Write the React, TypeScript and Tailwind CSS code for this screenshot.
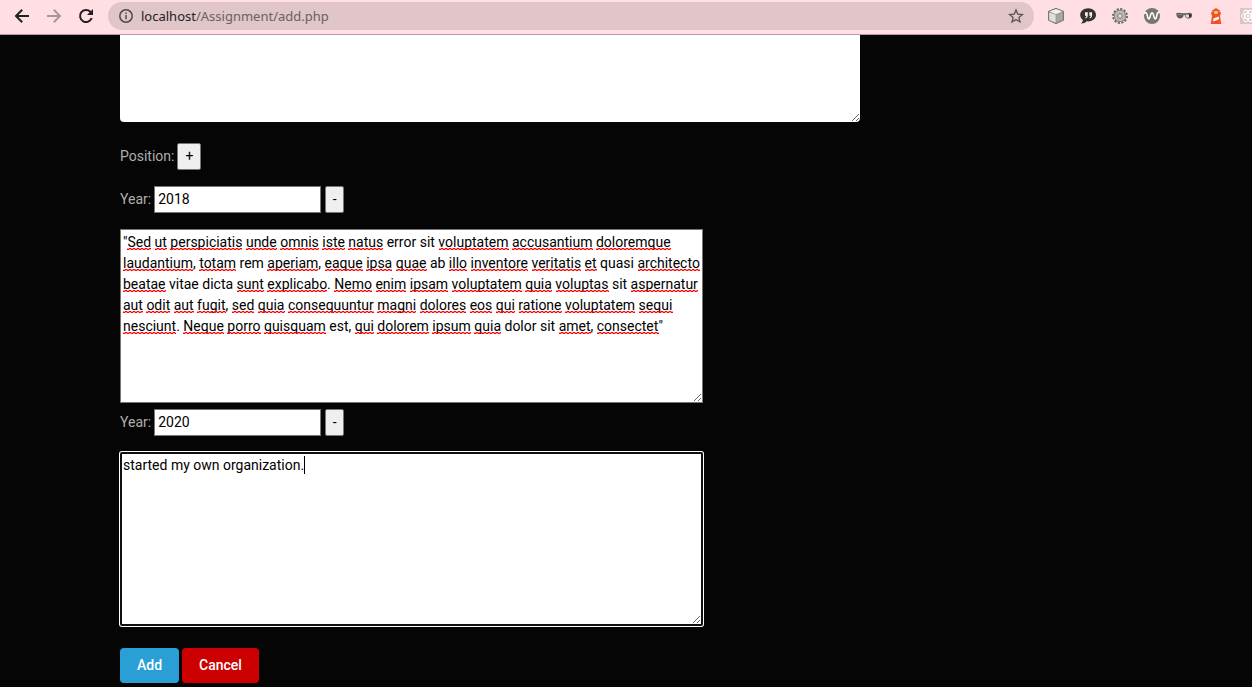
import { useState } from 'react'
import type { ReactNode } from 'react'

const BIO =
  '"Sed ut perspiciatis unde omnis iste natus error sit voluptatem accusantium doloremque laudantium, totam rem aperiam, eaque ipsa quae ab illo inventore veritatis et quasi architecto beatae vitae dicta sunt explicabo. Nemo enim ipsam voluptatem quia voluptas sit aspernatur aut odit aut fugit, sed quia consequuntur magni dolores eos qui ratione voluptatem sequi nesciunt. Neque porro quisquam est, qui dolorem ipsum quia dolor sit amet, consectet"'

const KNOWN_WORDS = new Set(['error', 'sit', 'rem', 'ab', 'quasi', 'vitae', 'dicta', 'est', 'dolor', 'started', 'my', 'own', 'organization'])

/** Underlines the words that the dictionary does not have. */
function spellingMarks(text: string): ReactNode[] {
  return text.split(/([A-Za-z]+)/).map((part, i) =>
    i % 2 === 1 && !KNOWN_WORDS.has(part) ? (
      <span
        key={i}
        className="bg-[linear-gradient(90deg,#f00_0_2px,#f006_2px_4px),linear-gradient(90deg,#f00_0_2px,#f006_2px_4px)] bg-[length:4px_1px,4px_1px] bg-[position:0_100%,2px_calc(100%-1px)] bg-repeat-x"
      >
        {part}
      </span>
    ) : (
      part
    ),
  )
}

function Toolbar() {
  return (
    <header className="flex h-[35px] shrink-0 items-start overflow-hidden border-b border-[#b39ca1] bg-[#ffdfe4] text-[#202124]">
      <nav className="flex h-8 shrink-0 items-center gap-4 pr-3.5 pl-3.5" aria-label="Browser">
        <button type="button" aria-label="Back">
          <svg className="size-4" viewBox="0 0 16 16" fill="none" stroke="currentColor" strokeWidth="2">
            <path d="M15 8H2.5M8.2 1.8L2 8l6.200 6.200" />
          </svg>
        </button>
        <button type="button" aria-label="Forward" className="text-[#a8989b]">
          <svg className="size-4" viewBox="0 0 16 16" fill="none" stroke="currentColor" strokeWidth="2">
            <path d="M1 8h12.500M7.800 1.800L14 8l-6.200 6.200" />
          </svg>
        </button>
        <button type="button" aria-label="Reload">
          <svg className="size-4" viewBox="0 0 16 16" fill="none">
            <path d="M13.700 10A6 6 0 1 1 12.300 3.800L13.500 5" stroke="currentColor" strokeWidth="2" />
            <path d="M15 1v6H9z" fill="currentColor" />
          </svg>
        </button>
      </nav>
      <div className="mt-0.5 flex h-7 min-w-0 flex-1 items-center rounded-full bg-[#e0c5c9] pr-2.5 pl-[11px]">
        <svg className="size-3.5 shrink-0" viewBox="0 0 14 14" fill="none" stroke="#4f494b" aria-hidden="true">
          <circle cx="7" cy="7" r="6.200" strokeWidth="1.500" />
          <path d="M7 6v4.300M7 3.500v1.500" strokeWidth="1.500" />
        </svg>
        <div className="ml-2 flex-1 truncate font-['Noto_Sans','Open_Sans',sans-serif] text-[13px] leading-5 text-[#6c6064]">
          <span className="text-[#202124]">localhost</span>/Assignment/add.php
        </div>
        <button type="button" aria-label="Bookmark this page">
          <svg className="size-4" viewBox="0 0 16 16" fill="none" stroke="#5b5356" strokeWidth="1.300">
            <path d="M8 1.900l1.800 4.200 4.600.4-3.500 3 1.100 4.500L8 11.600 4 14l1.100-4.500-3.500-3 4.600-.4z" />
          </svg>
        </button>
      </div>
      <div className="-mr-1 flex h-8 shrink-0 items-center gap-4 pl-3.5">
        <button type="button" aria-label="Cube extension">
          <svg className="size-4" viewBox="0 0 16 16">
            <path d="M8 .3l7.500 3v9L8 15.700.5 12.300v-9z" fill="#8b8b8b" stroke="#666" strokeWidth=".8" />
            <path d="M8 1l6.500 2.600L8 6.200 1.500 3.600z" fill="#f0f0f0" />
            <path d="M1.200 4.300L7.700 6.800v8L1.200 12z" fill="#dedede" />
            <path d="M8.300 6.800L14.800 4.300V12l-6.500 2.800z" fill="#a6a6a6" />
          </svg>
        </button>
        <button type="button" aria-label="Quote extension">
          <svg className="size-4" viewBox="0 0 16 16">
            <path d="M8.200.3C3.900.3.200 3.100.2 7c0 2.100 1 3.800 2.700 5-.1 1.400-.9 2.700-2 3.500 2.300.2 4.400-.7 5.800-2.200 5.100.6 9.300-2.200 9.300-6.300C16 3.100 12.500.3 8.200.3z" fill="#333" />
            <path d="M5 4.300h2.800v3c0 1.700-.8 2.700-2.200 3.100l-.4-.8c.8-.4 1.100-.9 1.200-1.900H5zM9.300 4.300h2.800v3c0 1.700-.8 2.700-2.200 3.100l-.4-.8c.8-.4 1.100-.9 1.200-1.900H9.300z" fill="#ffe8ec" />
          </svg>
        </button>
        <button type="button" aria-label="Gear extension">
          <svg className="size-4" viewBox="0 0 16 16" fill="none">
            <circle cx="8" cy="8" r="6.900" stroke="#666" strokeWidth="2" strokeDasharray="2.200 1.410" />
            <circle cx="8" cy="8" r="4.600" stroke="#8c8c8c" strokeWidth="3.200" />
            <circle cx="8" cy="8" r="4.200" stroke="#c9c9c9" strokeWidth="1.400" />
            <circle cx="8" cy="8" r="2.300" fill="#f6d9de" stroke="#6a6a6a" />
          </svg>
        </button>
        <button type="button" aria-label="Wave extension">
          <svg className="size-4" viewBox="0 0 16 16" fill="none">
            <circle cx="8" cy="8" r="8" fill="#757575" />
            <path
              d="M.3 5.800C1.500 4 2.600 4.300 3.100 6.500l.7 3c.5 2.100 1.500 2.100 2 0L7 5.800c.5-1.500 1.600-1.500 2.100 0l1.100 3.700c.6 2.100 1.600 2.100 2.100 0l1-4c.3-1.200 1.300-1.500 2.100-.6"
              stroke="#fff"
              strokeWidth="1.500"
            />
          </svg>
        </button>
        <button type="button" aria-label="Glasses extension">
          <svg className="size-4" viewBox="0 0 16 16">
            <path d="M0 5.500l2-.7 5.500.5h2L14 4.800l2 1v2.500c-.8 2.800-5.800 3.200-6.700.3L8.700 7H7.600C7.400 11.500 1.500 11.500.8 8z" fill="#625b5d" />
            <path d="M9.800 6.400h3.400v2.900c-1.500.7-3 .3-3.300-1.100z" fill="#ddd" />
            <path d="M12.600 6.300l2.500.2-.3 2-1.500.8z" fill="#292929" />
            <path d="M1.500 6h5v1.200h-5z" fill="#8b8285" />
          </svg>
        </button>
        <button type="button" aria-label="Lighthouse extension">
          <svg className="size-4" viewBox="0 0 16 16">
            <path d="M8 0l3.800 2.500v2H13v2h-1v2l1.300 7.500H2.700L4 8.500v-2H3v-2h1.200v-2z" fill="#f0502a" />
            <path d="M6.200 3h3.600v3H6.200z" fill="#ffd35a" />
            <path d="M5.500 10.600l5.200-2.200.3 2.800-5.800 2.400z" fill="#fff" />
          </svg>
        </button>
        <button type="button" aria-label="React extension">
          <svg className="size-4" viewBox="0 0 16 16" fill="none" stroke="#fff">
            <path d="M0 0h16v16H0z" fill="#dcc5c9" stroke="none" />
            <ellipse cx="8" cy="8" rx="6.500" ry="2.600" />
            <ellipse cx="8" cy="8" rx="6.500" ry="2.600" transform="rotate(60 8 8)" />
            <ellipse cx="8" cy="8" rx="6.500" ry="2.600" transform="rotate(120 8 8)" />
            <circle cx="8" cy="8" r="1.200" fill="#fff" stroke="none" />
          </svg>
        </button>
      </div>
    </header>
  )
}

type PositionProps = { id: string; initialYear: string; initialText: string; active?: boolean }

function Position({ id, initialYear, initialText, active = false }: PositionProps) {
  const [year, setYear] = useState(initialYear)
  const [text, setText] = useState(initialText)
  return (
    <section className="flex flex-col gap-4">
      <div className="flex items-center">
        <label htmlFor={`year-${id}`} className="mr-[3px]">
          Year:
        </label>
        <input
          id={`year-${id}`}
          type="text"
          value={year}
          onChange={(e) => setYear(e.target.value)}
          className="h-[27px] w-[167px] border border-[#767676] bg-white px-[3px] pb-0.5 text-black outline-none"
        />
        <button type="button" aria-label="Remove position" className="ml-1 h-[27px] w-[19px] rounded-xs border border-[#767676] bg-[#efefef] text-black">
          -
        </button>
      </div>
      <div className="relative w-[583px] max-w-full">
        <textarea
          aria-label={`Description ${id}`}
          rows={8}
          spellCheck={false}
          value={text}
          onChange={(e) => setText(e.target.value)}
          className={
            active
              ? 'block w-full resize overflow-auto rounded-xs border-2 border-[#101010] bg-white p-px text-black ring-1 ring-white outline-none'
              : 'block w-full resize overflow-auto border border-[#767676] bg-white p-0.5 text-black outline-none'
          }
        />
        <div aria-hidden="true" className="pointer-events-none absolute inset-0 py-[3px] pl-[3px] wrap-break-word whitespace-pre-wrap text-transparent select-none">
          {spellingMarks(text)}
          {active && <span className="border-r border-black py-px" />}
        </div>
      </div>
    </section>
  )
}

export default function App() {
  return (
    <div className="flex h-screen flex-col overflow-hidden bg-[#050505] font-[Roboto,sans-serif] text-sm leading-[21px] text-[#adafae]">
      <Toolbar />
      <main className="flex-1 overflow-hidden px-[120px]">
        <form onSubmit={(e) => e.preventDefault()}>
          <textarea
            aria-label="Summary"
            className="block h-[87px] w-[740px] max-w-full resize rounded-b bg-white p-2 text-black outline-none"
          />
          <div className="mt-[21px] flex items-center gap-[3px]">
            <span>Position:</span>
            <button type="button" aria-label="Add position" className="h-[27px] w-6 rounded-xs border border-[#767676] bg-[#efefef] text-black">
              +
            </button>
          </div>
          <div className="mt-4 flex flex-col gap-1.5">
            <Position id="1" initialYear="2018" initialText={BIO} />
            <Position id="2" initialYear="2020" initialText="started my own organization." active />
          </div>
          <div className="mt-[22px] flex gap-[3px] font-medium text-white">
            <button type="submit" className="h-[35px] rounded bg-[#2a9fd6] px-[17px]">
              Add
            </button>
            <button type="button" className="h-[35px] rounded bg-[#cc0000] px-[17px]">
              Cancel
            </button>
          </div>
        </form>
      </main>
    </div>
  )
}
